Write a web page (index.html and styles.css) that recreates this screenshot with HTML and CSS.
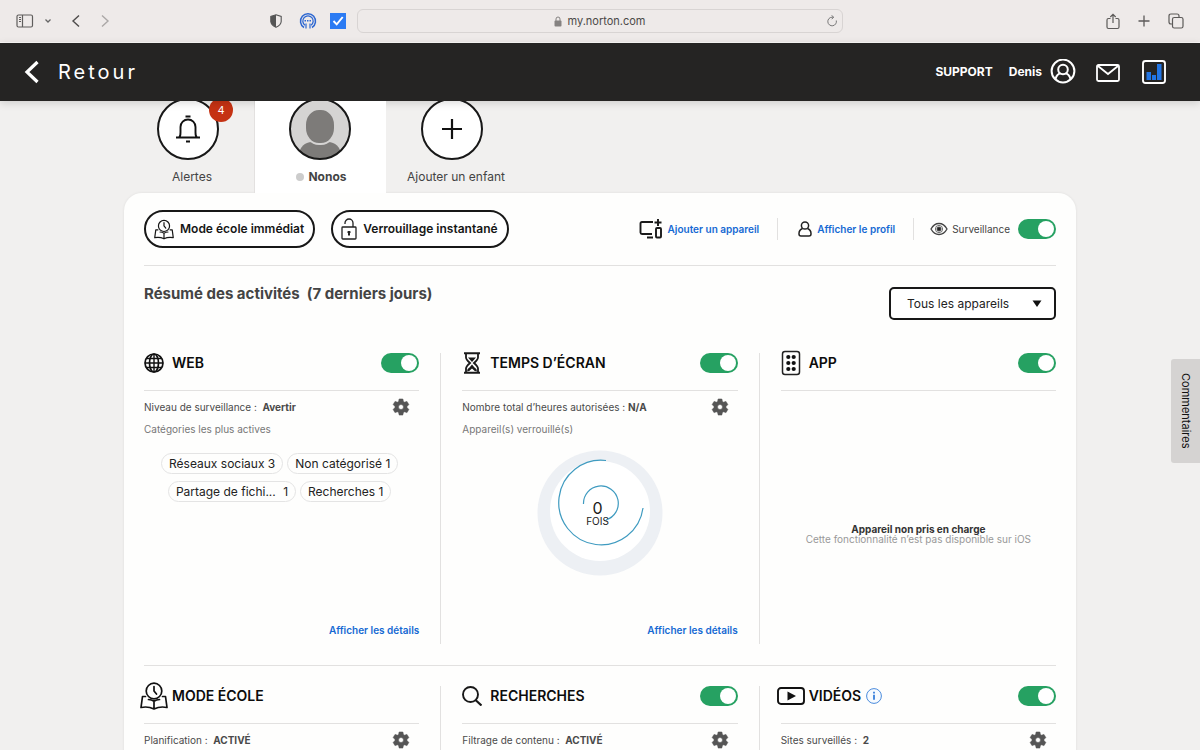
FILE: index.html
```html
<!DOCTYPE html>
<html lang="fr">
<head>
<meta charset="utf-8">
<title>Norton Family</title>
<link rel="stylesheet" href="styles.css">
</head>
<body>
<svg class="defs" width="0" height="0" aria-hidden="true">
  <symbol id="gear" viewBox="0 0 24 24"><path d="M19.14 12.94c.04-.3.06-.61.06-.94s-.02-.64-.07-.94l2.03-1.58a.49.49 0 0 0 .12-.61l-1.92-3.32a.49.49 0 0 0-.59-.22l-2.39.96a7 7 0 0 0-1.62-.94l-.36-2.54a.48.48 0 0 0-.48-.41h-3.84a.47.47 0 0 0-.47.41l-.36 2.54a7.200 7.200 0 0 0-1.62.94l-2.390-.96a.48.48 0 0 0-.59.22L2.740 8.870a.47.47 0 0 0 .12.61l2.030 1.580c-.05.3-.09.63-.09.94s.02.64.07.94l-2.030 1.580a.49.49 0 0 0-.12.61l1.920 3.320c.12.22.37.29.59.22l2.390-.96c.5.38 1.030.7 1.620.94l.36 2.540c.05.24.24.41.48.41h3.840c.24 0 .44-.17.47-.41l.36-2.540a7 7 0 0 0 1.620-.94l2.390.96c.22.08.47 0 .59-.22l1.920-3.320a.47.47 0 0 0-.12-.61zM12 15a3 3 0 1 1 0-6 3 3 0 0 1 0 6z" fill="currentColor" stroke="currentColor" stroke-width=".7"/></symbol>
  <symbol id="school" viewBox="0 0 28 28"><g fill="none" stroke="currentColor" stroke-width="1.700" stroke-linejoin="round" stroke-linecap="round"><circle cx="14" cy="9" r="7.800"/><path d="M14 4.500V9l2.500 3M5.500 14.500h-3L1 25.500q7-1.500 13 1.500 6-3 13-1.500l-1.500-11h-3M14 19v8M8.500 17.500q3 .2 5.500 1.700 2.500-1.500 5.500-1.700"/></g></symbol>
</svg>
<div class="page">
  <div class="browser">
    <div class="browser-side">
      <button aria-label="Barre latérale"><svg width="18" height="14" viewBox="0 0 18 14" fill="none" stroke="#5f5d5c" stroke-width="1.200"><rect x="1" y="1" width="15.500" height="12" rx="1.500"/><path d="M6.500 1v12M3 3.500h2M3 5.500h2M3 7.500h2"/></svg></button>
      <button aria-label="Groupes d’onglets"><svg width="8" height="6" viewBox="0 0 8 6" fill="none" stroke="#666" stroke-width="1.300"><path d="M1.500 1.500 4 4l2.500-2.500"/></svg></button>
      <button class="back" aria-label="Page précédente"><svg width="10" height="14" viewBox="0 0 10 14" fill="none" stroke="#4e4c4b" stroke-width="1.400"><path d="M8 1.500 2 7l6 5.500"/></svg></button>
      <button class="forward" aria-label="Page suivante"><svg width="10" height="14" viewBox="0 0 10 14" fill="none" stroke="#aba8a7" stroke-width="1.400"><path d="M2 1.500 8 7l-6 5.500"/></svg></button>
      <div class="extensions">
        <button aria-label="Confidentialité"><svg width="12" height="14" viewBox="0 0 12 14"><path d="M6 .8 11.200 2.500v5Q11 11 6 13.300 1 11 .8 7.500v-5z" fill="none" stroke="#555" stroke-width="1.100"/><path d="M6 .8v12.500Q1 11 .8 7.500v-5z" fill="#555"/></svg></button>
        <button aria-label="Extension mots de passe"><svg width="18" height="18" viewBox="0 0 18 18" fill="none" stroke="#2d67d1"><path d="M5 15.500a7.500 7.500 0 1 1 8 0" stroke-width="1.500"/><path d="M6 13.300a5.200 5.200 0 1 1 6 0" stroke-width="1.300"/><path d="M7 11.500v5M11 11.500v5" stroke-width="1.200"/><path d="M5.500 8.700h7" stroke-width="1.400" stroke-dasharray="1.500 1"/></svg></button>
        <button aria-label="Extension Norton"><svg width="16" height="16" viewBox="0 0 16 16"><path fill="#2b7bf3" d="M0 0h16v16H0z"/><path d="m3.500 8 3.200 3.400L12.700 4" fill="none" stroke="#fff" stroke-width="1.900"/></svg></button>
      </div>
    </div>
    <div class="address">
      <svg width="8" height="11" viewBox="0 0 8 11"><rect x=".5" y="4.500" width="7" height="6" rx="1" fill="#858281"/><path d="M2 5V3a2 2 0 0 1 4 0v2" fill="none" stroke="#858281"/></svg>
      <span>my.norton.com</span>
      <button class="reload" aria-label="Actualiser"><svg width="12" height="12" viewBox="0 0 12 12" fill="none" stroke="#777" stroke-width="1"><path d="M10.300 5.500A4.300 4.300 0 1 1 6 2.200h1.500M5.500.3l2.200 1.900-2 2"/></svg></button>
    </div>
    <div class="browser-end">
      <button aria-label="Partager"><svg width="14" height="17" viewBox="0 0 14 17" fill="none" stroke="#5c5a59" stroke-width="1.200"><path d="M4.500 5.500h-2Q1 5.500 1 7v7q0 1.500 1.500 1.500h9Q13 15.500 13 14V7q0-1.500-1.500-1.500h-2M7 10V1.500M4.300 4 7 1.300 9.700 4"/></svg></button>
      <button aria-label="Nouvel onglet"><svg width="12" height="12" viewBox="0 0 12 12" stroke="#5c5a59" stroke-width="1.300"><path d="M6 .5v11M.5 6h11"/></svg></button>
      <button aria-label="Tous les onglets"><svg width="16" height="16" viewBox="0 0 16 16" fill="none" stroke="#5c5a59" stroke-width="1.200"><rect x="4.500" y="4.500" width="10.500" height="10.500" rx="1.800"/><path d="M4 11H3q-2 0-2-2V3q0-2 2-2h6q2 0 2 2v1"/></svg></button>
    </div>
  </div>

  <header class="topbar">
    <a class="return" href="#"><svg width="16" height="24" viewBox="0 0 16 24" fill="none" stroke="#fff" stroke-width="3.200"><path d="M13.500 2 3 12l10.500 10"/></svg><span>Retour</span></a>
    <nav class="topnav">
      <a href="#">SUPPORT</a>
      <a class="user" href="#">Denis <svg width="26" height="26" viewBox="0 0 26 26" fill="none" stroke="#fff" stroke-width="2"><circle cx="13" cy="12" r="11.400"/><circle cx="13" cy="10.500" r="4.800"/><path d="M5.500 20q1.500-5.300 5-5.500M20.500 20q-1.500-5.300-5-5.500"/></svg></a>
      <a class="mail" href="#" aria-label="Messages"><svg width="26" height="20" viewBox="0 0 26 20" fill="none" stroke="#fff" stroke-width="1.800"><rect x="2" y="3" width="22" height="16" rx="1.500"/><path d="m3 4 10 8 10-8"/></svg></a>
      <a class="stats" href="#" aria-label="Statistiques"><svg width="26" height="26" viewBox="0 0 26 26"><rect x="2" y="2" width="22" height="22" rx="2.500" fill="none" stroke="#fff" stroke-width="1.900"/><path d="M5.500 13h4.500v8H5.500zM11 16h4v5h-4zM16 5h4.500v16H16z" fill="#2275e4"/></svg></a>
    </nav>
  </header>

  <main class="content">
    <nav class="tabs">
      <a class="tab alerts" href="#">
        <span class="avatar"><svg width="26" height="28" viewBox="0 0 26 28" fill="none" stroke="#111" stroke-width="1.900"><path d="M1 22.500h24M4 22.500q1.500-1 1.500-5V12a7.500 7.500 0 0 1 15 0v5.500q0 4 1.500 5M10.500 1.500h5M11 26.500h4"/></svg><span class="badge">4</span></span>
        <span class="tab-name">Alertes</span>
      </a>
      <a class="tab child" href="#">
        <span class="avatar"><svg width="62" height="62" viewBox="0 0 62 62"><defs><clipPath id="face"><circle cx="31" cy="31" r="30"/></clipPath></defs><g clip-path="url(#face)"><path fill="#d5d4d3" d="M0 0h62v62H0z"/><path d="M9 58q3-14 14-14h16q11 0 14 14v4H9z" fill="#7d7b79"/><rect x="16" y="11" width="30" height="35" rx="14" ry="16" fill="#7d7b79" stroke="#d5d4d3" stroke-width="2"/></g><circle cx="31" cy="31" r="30" fill="none" stroke="#181818" stroke-width="2"/></svg></span>
        <span class="tab-name"><i class="dot"></i>Nonos</span>
      </a>
      <a class="tab add" href="#">
        <span class="avatar"><svg width="20" height="20" viewBox="0 0 20 20" stroke="#111" stroke-width="2.200"><path d="M10 0v20M0 10h20"/></svg></span>
        <span class="tab-name">Ajouter un enfant</span>
      </a>
    </nav>

    <section class="panel">
      <div class="actions">
        <div class="modes">
          <button class="pill"><svg width="20" height="21"><use href="#school"/></svg>Mode école immédiat</button>
          <button class="pill lock"><svg width="16" height="22" viewBox="0 0 16 22" fill="none" stroke="#222" stroke-width="1.300"><rect x="1" y="9" width="14" height="12" rx=".8"/><path d="M4 6V5a4 4 0 0 1 8 0v4"/><path d="M8 13v4M6.500 14.200h3M7 16.500h2" stroke-width="1.800"/></svg>Verrouillage instantané</button>
        </div>
        <div class="tools">
          <a class="tool" href="#"><svg width="24" height="22" viewBox="0 0 24 22" fill="none" stroke="#1a1a1a" stroke-width="1.900"><path d="M14 4H3Q1.500 4 1.500 5.500v9Q1.500 16 3 16h10M8 19.500h6M19 1v7M15.500 4.500h7"/><rect x="17" y="10" width="5" height="9.500" rx="1"/></svg>Ajouter un appareil</a>
          <a class="tool profile" href="#"><svg width="14" height="16" viewBox="0 0 14 16" fill="none" stroke="#222" stroke-width="1.500"><circle cx="7" cy="4.500" r="3.600"/><path d="M4.500 7.500Q1 9 1 12.500V13q0 2 2 2h8q2 0 2-2v-.5Q13 9 9.500 7.500"/></svg>Afficher le profil</a>
          <label class="watch"><svg width="18" height="14" viewBox="0 0 18 14" fill="none" stroke="#444"><path d="M1 7q3-5.500 8-5.500T17 7q-3 5.500-8 5.500T1 7z" stroke-width="1.300"/><circle cx="9" cy="7" r="3.600" stroke-width=".8"/><circle cx="9" cy="7" r="2" fill="#222"/></svg>Surveillance<input class="toggle" type="checkbox" checked></label>
        </div>
      </div>

      <div class="summary">
        <h1>Résumé des activités&nbsp; (7 derniers jours)</h1>
        <div class="device">
          <select aria-label="Appareil"><option>Tous les appareils</option></select>
          <svg width="10" height="7" viewBox="0 0 10 7"><path d="M.5.500h9L5 7z" fill="#111"/></svg>
        </div>
      </div>

      <div class="row">
        <article class="card">
          <div class="card-head"><svg class="icon" width="20" height="20" viewBox="0 0 20 20" fill="none" stroke="#111" stroke-width="1.700"><circle cx="10" cy="10" r="9"/><ellipse cx="10" cy="10" rx="4.500" ry="9"/><path d="M10 1v18M1 10h18M2.500 5.500h15M2.500 14.500h15" stroke-width="1.400"/></svg><h2>WEB</h2><input class="toggle" type="checkbox" checked aria-label="Web"></div>
          <div class="status"><p>Niveau de surveillance :&nbsp; <b>Avertir</b></p><button class="gear" aria-label="Réglages Web"><svg width="20" height="20"><use href="#gear"/></svg></button></div>
          <p class="note">Catégories les plus actives</p>
          <ul class="tags">
            <li>Réseaux sociaux <span>3</span></li><li>Non catégorisé <span>1</span></li>
            <li>Partage de fichi... <span class="far">1</span></li><li>Recherches <span>1</span></li>
          </ul>
          <a class="details" href="#">Afficher les détails</a>
        </article>
        <i class="divider"></i>
        <article class="card">
          <div class="card-head"><svg class="icon" width="20" height="22" viewBox="0 0 20 22"><path d="M2 1.300h16M2 20.700h16" stroke="#1a1a1a" stroke-width="2"/><path d="M4 2v3.500q0 2 4 5.500-4 3.500-4 5.500V20M16 2v3.500q0 2-4 5.500 4 3.500 4 5.500V20" fill="none" stroke="#1a1a1a" stroke-width="1.800"/><path d="M6 5.500h8L10 10zM5 19.500q0-3 2.500-4L10 12.500l2.500 3q2.500 1 2.500 4-2.500 0-5-3-2.500 3-5 3z" fill="#1a1a1a"/></svg><h2>TEMPS D’ÉCRAN</h2><input class="toggle" type="checkbox" checked aria-label="Temps d’écran"></div>
          <div class="status"><p>Nombre total d’heures autorisées : <b>N/A</b></p><button class="gear" aria-label="Réglages temps d’écran"><svg width="20" height="20"><use href="#gear"/></svg></button></div>
          <p class="note">Appareil(s) verrouillé(s)</p>
          <svg class="gauge" width="126" height="126" viewBox="0 0 126 126"><circle cx="63" cy="63" r="62.500" fill="#edf0f4"/><circle cx="63" cy="61" r="50" fill="#fff"/><g fill="none" stroke="#3f9bc0" stroke-width="1.200"><path d="M69 10.500A42.300 42.300 0 1 0 106 58"/><path d="M46.500 54A17.400 17.400 0 1 1 69 70"/></g><text x="60.500" y="64" font-size="16">0</text><text x="60.500" y="75" font-size="10">FOIS</text></svg>
          <a class="details" href="#">Afficher les détails</a>
        </article>
        <i class="divider"></i>
        <article class="card">
          <div class="card-head"><svg class="icon" width="20" height="26" viewBox="0 0 20 26"><rect x="1.500" y="1.500" width="17" height="23" rx="2.500" fill="none" stroke="#222" stroke-width="1.500"/><g fill="#111"><circle cx="7.300" cy="7" r="2.100"/><circle cx="12.700" cy="7" r="2.100"/><circle cx="7.300" cy="13" r="2.100"/><circle cx="12.700" cy="13" r="2.100"/><circle cx="7.300" cy="19" r="2.100"/><circle cx="12.700" cy="19" r="2.100"/></g></svg><h2>APP</h2><input class="toggle" type="checkbox" checked aria-label="App"></div>
          <div class="unsupported"><b>Appareil non pris en charge</b><span>Cette fonctionnalité n’est pas disponible sur iOS</span></div>
        </article>
      </div>

      <div class="row">
        <article class="card">
          <div class="card-head"><svg class="icon wide" width="28" height="28"><use href="#school"/></svg><h2>MODE ÉCOLE</h2></div>
          <div class="status"><p>Planification :&nbsp; <b>ACTIVÉ</b></p><button class="gear" aria-label="Réglages mode école"><svg width="20" height="20"><use href="#gear"/></svg></button></div>
        </article>
        <i class="divider"></i>
        <article class="card">
          <div class="card-head"><svg class="icon" width="20" height="20" viewBox="0 0 20 20" fill="none" stroke="#181818" stroke-width="1.900"><circle cx="8.500" cy="8.500" r="7.500"/><path d="m13.500 14 6 5.500" stroke-width="2.200"/></svg><h2>RECHERCHES</h2><input class="toggle" type="checkbox" checked aria-label="Recherches"></div>
          <div class="status"><p>Filtrage de contenu :&nbsp; <b>ACTIVÉ</b></p><button class="gear" aria-label="Réglages recherches"><svg width="20" height="20"><use href="#gear"/></svg></button></div>
        </article>
        <i class="divider"></i>
        <article class="card">
          <div class="card-head"><svg class="icon wide" width="28" height="18" viewBox="0 0 28 18"><rect x="1" y="1" width="26" height="16" rx="3" fill="none" stroke="#111" stroke-width="1.900"/><path d="m10.500 4.500 8.500 4.500-8.500 4.500z" fill="#111"/></svg><h2>VIDÉOS</h2><button class="info" aria-label="Informations"><svg width="16" height="16" viewBox="0 0 16 16"><circle cx="8" cy="8" r="7.400" fill="#f7fbff" stroke="#4a8bdc"/><path d="M8 3.800v1.800M8 6.800v4.900" stroke="#1f6fd6" stroke-width="1.600"/></svg></button><input class="toggle" type="checkbox" checked aria-label="Vidéos"></div>
          <div class="status"><p>Sites surveillés :&nbsp; <b>2</b></p><button class="gear" aria-label="Réglages vidéos"><svg width="20" height="20"><use href="#gear"/></svg></button></div>
        </article>
      </div>
    </section>
  </main>
  <button class="feedback">Commentaires</button>
</div>
</body>
</html>
```
FILE: styles.css
```css
* { box-sizing: border-box; }
body { margin: 0; font: 11px/16px Inter, "Liberation Sans", sans-serif; color: #444; background: #f1f0ef; }
h1, h2, p, ul { margin: 0; padding: 0; }
a { color: inherit; text-decoration: none; }
svg { display: block; flex: none; }
button { display: flex; align-items: center; padding: 0; border: 0; background: none; font: inherit; color: inherit; cursor: pointer; }
.defs { position: absolute; }
.page { height: 100vh; display: flex; flex-direction: column; overflow: hidden; }

.browser { flex: none; display: grid; grid-template-columns: 1fr minmax(0, 486px) 1fr; align-items: center; height: 43px; padding: 0 16px; background: #eeeae9; border-bottom: 1px solid #fbf9f8; }
.browser-side { display: flex; align-items: center; gap: 10px; }
.back, .forward { margin-left: 9px; }
.extensions { display: flex; align-items: center; gap: 13px; margin-left: auto; padding-right: 11px; }
.extensions button:first-child { padding-right: 4px; }
.address { display: flex; align-items: center; gap: 5px; height: 24px; padding: 0 4px; border: 1px solid #d8d4d3; border-radius: 6px; color: #4b4948; }
.address svg:first-child { margin-left: auto; }
.address .reload { flex: 1; justify-content: flex-end; }
.address::before { content: ""; flex: 1; }
.browser-end { display: flex; align-items: center; justify-content: flex-end; gap: 18px; }

.topbar { flex: none; display: flex; align-items: center; justify-content: space-between; height: 58px; padding: 0 33px 0 24px; background: #252423; color: #fff; z-index: 1; box-shadow: 0 2px 8px rgba(0, 0, 0, .15); }
.return { display: flex; align-items: center; gap: 18px; font-size: 20px; letter-spacing: 3px; }
.topnav { display: flex; align-items: center; gap: 16px; font-size: 12px; font-weight: 700; }
.user { display: flex; align-items: center; gap: 8px; }
.mail { margin-left: 3px; }
.stats { margin-left: 4px; }

.content { flex: 1; min-height: 0; overflow: auto; scrollbar-width: none; padding: 0 124px; }
.tabs { display: flex; height: 95px; margin-top: -3px; }
.tab { display: flex; flex-direction: column; align-items: center; gap: 9px; font-size: 12px; }
.alerts { width: 131px; border-right: 1px solid #e3e1e0; padding-left: 6px; }
.child { position: relative; z-index: 1; width: 131px; padding-right: 2px; background: #fff; }
.add { width: 140px; }
.avatar { position: relative; display: flex; align-items: center; justify-content: center; width: 62px; height: 62px; border: 2px solid #181818; border-radius: 50%; background: #fff; }
.alerts .avatar, .add .avatar { margin-right: 8px; }
.child .avatar { border: 0; }
.badge { position: absolute; top: -2px; right: -16px; width: 24px; height: 24px; border-radius: 50%; background: #c53213; color: #fff; font-size: 11px; line-height: 24px; text-align: center; }
.child .tab-name { display: flex; align-items: center; gap: 4px; font-weight: 700; padding-left: 4px; }
.dot { width: 8px; height: 8px; border-radius: 50%; background: #ccc; }

.panel { background: #fefefd; border-radius: 18px; padding: 17px 20px 40px; box-shadow: 0 0 3px rgba(0, 0, 0, .08); }
.actions { display: flex; justify-content: space-between; align-items: center; padding-bottom: 17px; border-bottom: 1px solid #e2e1e0; }
.modes { display: flex; gap: 16px; }
.pill { gap: 6px; height: 38px; padding: 0 9px 0 8px; border: 2px solid #181818; border-radius: 19px; background: #fff; color: #161616; font-size: 12px; font-weight: 600; }
.tools { display: flex; align-items: center; }
.tool { display: flex; align-items: center; gap: 5px; height: 22px; padding-right: 18px; border-right: 1px solid #e2e1e0; color: #1569d3; font-size: 10px; font-weight: 600; }
.profile { padding-left: 20px; }
.watch { display: flex; align-items: center; gap: 4px; padding-left: 16px; font-size: 10px; }
.watch .toggle { margin-left: 4px; }
.toggle { appearance: none; display: flex; flex: none; width: 38px; height: 20px; margin: 0; padding: 2px; border-radius: 10px; background: #26a162; justify-content: flex-end; cursor: pointer; }
.toggle::before { content: ""; width: 16px; height: 16px; border-radius: 50%; background: #fff; }
.toggle:not(:checked) { justify-content: flex-start; background: #aaa; }

.summary { display: flex; justify-content: space-between; padding: 20px 0 24px; }
h1 { font-size: 15px; line-height: 16px; font-weight: 700; }
.device { display: grid; align-items: center; width: 167px; margin-top: 1px; }
.device select { grid-area: 1 / 1; appearance: none; width: 100%; height: 33px; padding: 0 16px; border: 2px solid #181818; border-radius: 5px; background: #fff; color: #222; font: 12px/16px Inter, sans-serif; }
.device svg { grid-area: 1 / 1; justify-self: end; margin-right: 14px; pointer-events: none; }

.row { display: flex; gap: 21px; padding-bottom: 21px; }
.row + .row { border-top: 1px solid #e2e1e0; padding-top: 11px; }
.card { flex: 1; min-width: 0; min-height: 300px; display: flex; flex-direction: column; }
.divider { width: 1px; margin-top: 9px; background: #e2e1e0; }
.card-head { display: flex; align-items: center; min-height: 38px; margin-bottom: 8px; color: #111; }
.icon { margin-right: 8px; }
.icon.wide { margin: 0 4px 0 -4px; }
h2 { font-size: 14px; line-height: 18px; font-weight: 600; color: #0c0c0c; }
.card-head .toggle { margin-left: auto; }
.info { margin-left: 5px; }
.status { display: flex; align-items: center; justify-content: space-between; padding: 6px 8px 0 0; border-top: 1px solid #e2e1e0; font-size: 10px; color: #4a4a4a; }
.gear { color: #555; }
.note { margin-top: 4px; font-size: 10px; color: #777; }
.tags { display: flex; flex-wrap: wrap; justify-content: center; gap: 7px 4px; margin-top: 16px; padding: 0 4px 0 0; list-style: none; }
.tags li { height: 21px; padding: 0 7px; border: 1px solid #e4e4e4; border-radius: 11px; color: #222; font-size: 12px; line-height: 19px; }
.tags .far { margin-left: 4px; }
.gauge { align-self: center; margin-top: 13px; }
.gauge text { text-anchor: middle; fill: #1a1a1a; }
.details { margin-top: auto; align-self: flex-end; padding-bottom: 6px; color: #1569d3; font-size: 10px; font-weight: 600; }
.unsupported { display: flex; flex-direction: column; align-items: center; border-top: 1px solid #e2e1e0; padding-top: 133px; font-size: 10px; line-height: 10px; color: #999; }
.unsupported b { color: #333; }
.feedback { position: fixed; right: 0; top: 359px; width: 29px; height: 104px; justify-content: center; writing-mode: vertical-rl; background: #d5d3d2; border-radius: 3px 0 0 3px; color: #111; font-size: 11px; }
```
